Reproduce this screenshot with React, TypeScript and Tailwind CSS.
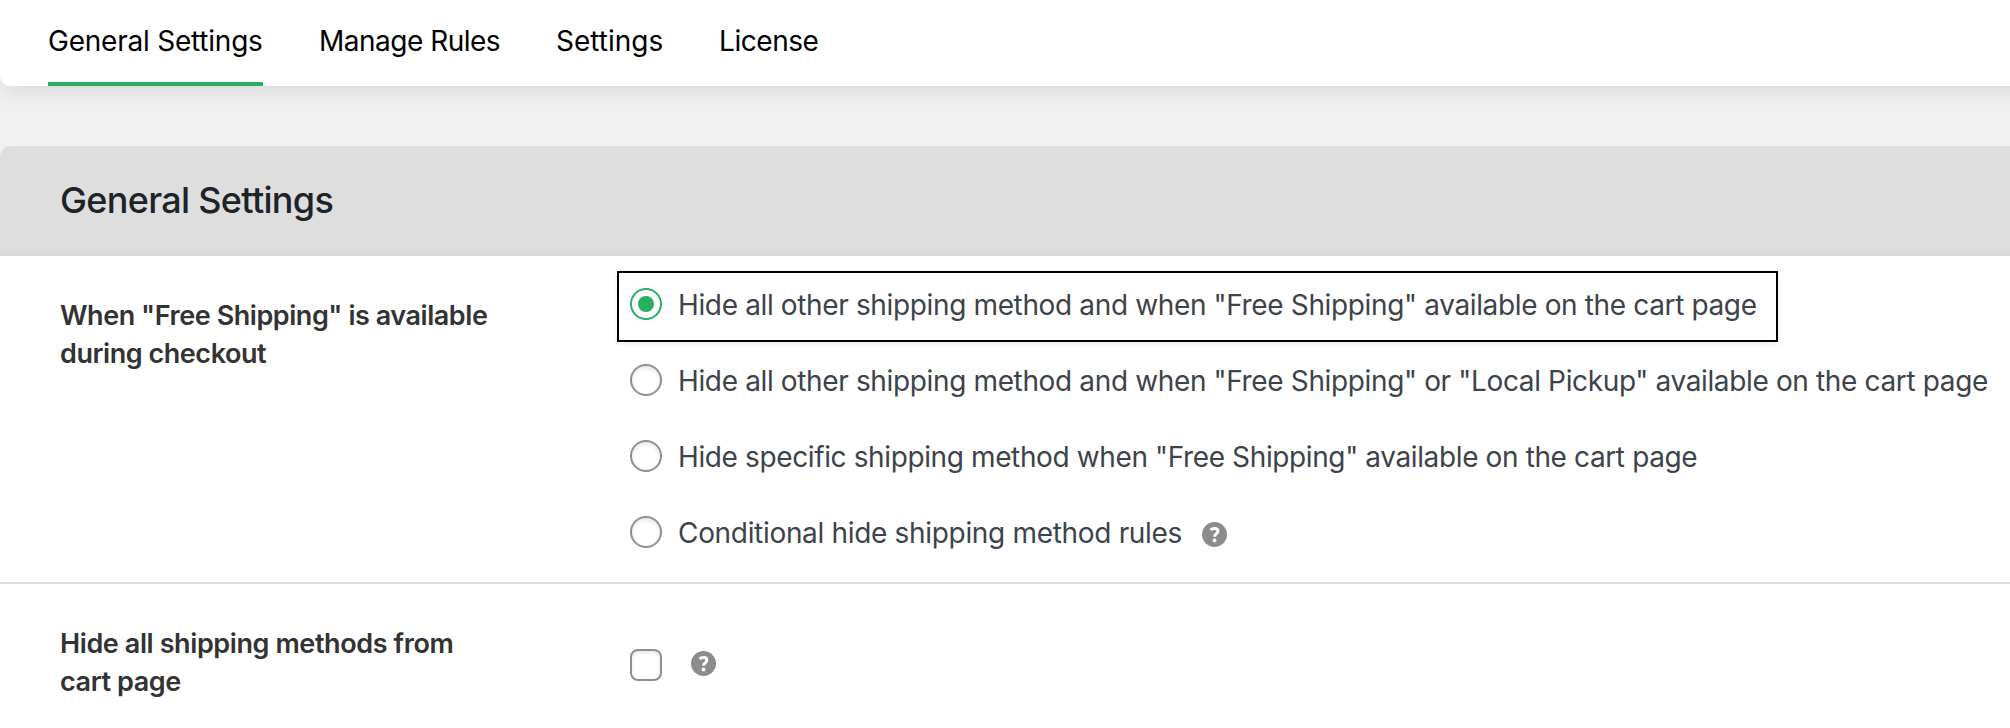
function HelpIcon() {
  return (
    <svg className="block size-[25px] shrink-0" viewBox="0 0 25 25" aria-hidden="true">
      <circle cx="12.5" cy="12.5" r="12.5" fill="#8c8c8c" />
      <path
        d="M8.400 7.900C9.600 7 11 6.600 12.500 6.600c2.200 0 3.400 1 3.400 2.700 0 1.400-.8 2.100-1.800 2.800-1.100.8-1.500 1.300-1.500 2.700"
        fill="none"
        stroke="#fff"
        strokeWidth="3"
      />
      <circle cx="12.500" cy="18.500" r="1.900" fill="#fff" />
    </svg>
  );
}

type OptionProps = { label: string; tracking: string; checked?: boolean; help?: boolean };

function Option({ label, tracking, checked, help }: OptionProps) {
  return (
    <label className="flex h-[76px] items-center whitespace-nowrap text-[28px] text-[#3c434a]">
      {checked ? (
        <span className="flex size-8 shrink-0 items-center justify-center rounded-full border-2 border-[#27ae60]">
          <span className="size-4 rounded-full bg-[#27ae60]" />
        </span>
      ) : (
        <span className="size-8 shrink-0 rounded-full border-2 border-[#8c8f94] shadow-[inset_0_2px_4px_rgba(0,0,0,0.1)]" />
      )}
      <span className={"ml-4 mt-0.5 " + tracking}>{label}</span>
      {help && (
        <span className="ml-5 mt-[5px]">
          <HelpIcon />
        </span>
      )}
    </label>
  );
}

export default function App() {
  return (
    <div className="flex h-[728px] w-[2010px] flex-col overflow-hidden bg-[#f1f1f1] font-['Inter',sans-serif]">
      <nav className="flex h-[86px] w-[2080px] shrink-0 gap-14 rounded-bl-[10px] bg-white pl-12 text-[28px] text-black shadow-[0_5px_25px_rgba(0,0,0,0.1)]">
        <a className="flex h-full w-[215px] items-center whitespace-nowrap border-b-4 border-[#27ae60] tracking-[-0.22px]">
          General Settings
        </a>
        <a className="flex h-[82px] w-[181px] items-center whitespace-nowrap tracking-[-0.5px]">Manage Rules</a>
        <a className="flex h-[82px] w-[107px] items-center whitespace-nowrap">Settings</a>
        <a className="flex h-[82px] items-center whitespace-nowrap tracking-[-0.45px]">License</a>
      </nav>
      <section className="mt-[60px] flex grow flex-col overflow-hidden rounded-tl-[10px] bg-white">
        <header className="flex h-[110px] shrink-0 items-center bg-[#dedede] pb-0.5 pl-[60px] shadow-[inset_0_-8px_8px_-6px_rgba(0,0,0,0.04)]">
          <h2 className="text-[36px] font-medium tracking-[-0.68px] text-[#1d2327]">General Settings</h2>
        </header>
        <div className="flex h-[328px] shrink-0 border-b-2 border-[#dcdcdc]">
          <h3 className="w-[617px] shrink-0 pl-[60px] pt-[41px] text-[27px] font-semibold leading-[38px] tracking-[-0.45px] text-[#333]">
            When "Free Shipping" is available
            <br />
            during checkout
          </h3>
          <div className="shrink-0 pt-[15px]">
            <div className="h-[71px] w-[1161px] border-2 border-black pl-[11px] shadow-[0_2px_6px_rgba(0,0,0,0.08)]">
              <div className="-mt-[7px]">
                <Option
                  checked
                  tracking="tracking-[-0.36px]"
                  label={'Hide all other shipping method and when "Free Shipping" available on the cart page'}
                />
              </div>
            </div>
            <div className="pl-[13px]">
              <Option
                tracking="tracking-[-0.36px]"
                label={'Hide all other shipping method and when "Free Shipping" or "Local Pickup" available on the cart page'}
              />
              <Option
                tracking="tracking-[-0.38px]"
                label={'Hide specific shipping method when "Free Shipping" available on the cart page'}
              />
              <Option help tracking="tracking-[-0.32px]" label="Conditional hide shipping method rules" />
            </div>
          </div>
        </div>
        <div className="flex">
          <h3 className="w-[617px] shrink-0 pl-[60px] pt-[41px] text-[27px] font-semibold leading-[38px] tracking-[-0.4px] text-[#333]">
            Hide all shipping methods from
            <br />
            cart page
          </h3>
          <div className="flex items-start pl-[13px] pt-[65px]">
            <span className="size-8 rounded-lg border-2 border-[#8c8f94] shadow-[inset_0_2px_4px_rgba(0,0,0,0.1)]" />
            <span className="ml-[29px] mt-[2px]">
              <HelpIcon />
            </span>
          </div>
        </div>
      </section>
    </div>
  );
}
